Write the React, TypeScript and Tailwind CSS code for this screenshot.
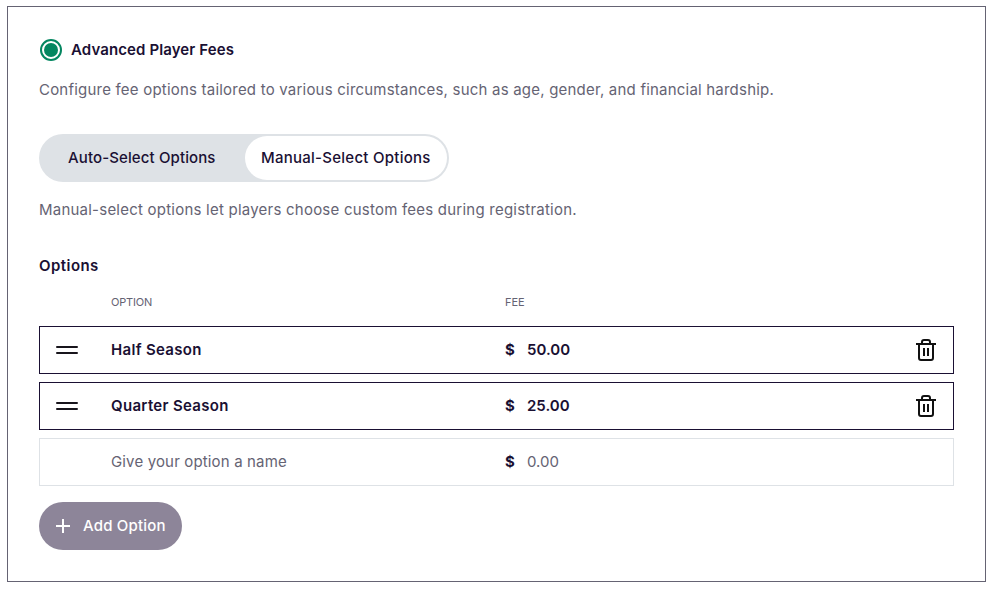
import { useState } from "react";

type FeeOption = {
  name: string;
  fee: string;
};

const initialOptions: FeeOption[] = [
  { name: "Half Season", fee: "50.00" },
  { name: "Quarter Season", fee: "25.00" },
];

const DragIcon = () => (
  <svg width="22" height="8" viewBox="0 0 22 8" fill="none" stroke="#18151c" strokeWidth="2" strokeLinecap="round">
    <path d="M1 1h20M1 7h20" />
  </svg>
);

const TrashIcon = () => (
  <svg
    width="24"
    height="24"
    viewBox="0 0 24 24"
    fill="none"
    stroke="#111111"
    strokeWidth="2"
    strokeLinejoin="round"
  >
    <path d="M2 6h20" />
    <path d="M5 6v14a2 2 0 0 0 2 2h10a2 2 0 0 0 2-2V6" />
    <path d="M8 6V4a2 2 0 0 1 2-2h4a2 2 0 0 1 2 2v2" />
    <path d="M10 10v8M14 10v8" />
  </svg>
);

const PlusIcon = () => (
  <svg width="14" height="14" viewBox="0 0 14 14" fill="none" stroke="currentColor" strokeWidth="2">
    <path d="M7 0v14M0 7h14" />
  </svg>
);

const App = () => {
  const [options, setOptions] = useState<FeeOption[]>(initialOptions);

  const removeOption = (name: string) => {
    setOptions(options.filter((option) => option.name !== name));
  };

  return (
    <div className="h-[593px] bg-white pt-1.5 pl-[7px] font-['Inter',sans-serif] text-[15px] leading-6 whitespace-nowrap text-[#1a1033] antialiased">
      <div className="h-[576px] w-[979px] border border-[#656373] p-[31px]">
        {/* Fee type */}
        <label className="flex items-center">
          <span className="ml-px flex size-[22px] items-center justify-center rounded-full border-2 border-[#048660]">
            <span className="size-[14px] rounded-full bg-[#048660]" />
          </span>
          <span className="ml-[9px] font-semibold tracking-[0.11px]">Advanced Player Fees</span>
        </label>
        <p className="mt-4 tracking-[0.21px] text-[#656373]">
          Configure fee options tailored to various circumstances, such as age, gender, and financial hardship.
        </p>

        {/* Mode toggle */}
        <div className="mt-8 flex h-12 w-[410px] rounded-full bg-[#dee2e6] p-0.5 font-medium">
          <button type="button" className="w-[204px] pl-[27px] text-left tracking-[0.12px]">
            Auto-Select Options
          </button>
          <button type="button" className="w-[202px] rounded-full bg-white pl-4 text-left tracking-[0.26px]">
            Manual-Select Options
          </button>
        </div>
        <p className="mt-4 tracking-[0.227px] text-[#656373]">
          Manual-select options let players choose custom fees during registration.
        </p>

        {/* Options */}
        <h2 className="mt-8 font-semibold tracking-[0.45px]">Options</h2>
        <div className="mt-4 flex pl-[72px] text-[11px] leading-4 tracking-[-0.2px] text-[#656373]">
          <span className="w-[394px]">OPTION</span>
          <span className="tracking-normal">FEE</span>
        </div>
        <div className="mt-4 flex flex-col gap-2">
          {options.map((option) => (
            <div key={option.name} className="flex h-12 items-center border border-[#1a1033] px-4 font-semibold">
              <span className="w-[55px]">
                <DragIcon />
              </span>
              <span className="w-[394px] tracking-[0.32px]">{option.name}</span>
              <span className="w-[22px] font-bold">$</span>
              <span>{option.fee}</span>
              <button type="button" className="-mr-px ml-auto" onClick={() => removeOption(option.name)}>
                <TrashIcon />
              </button>
            </div>
          ))}
          <div className="flex h-12 items-center border border-[#dee2e6] pr-4 pl-[71px] text-[#656373]">
            <span className="w-[394px] tracking-[0.15px]">Give your option a name</span>
            <span className="w-[22px] font-bold text-[#1a1033]">$</span>
            <span>0.00</span>
          </div>
        </div>
        <button
          type="button"
          className="mt-4 flex h-12 w-[143px] items-center rounded-full bg-[#8d8599] pl-[17px] font-medium text-white"
        >
          <PlusIcon />
          <span className="ml-[13px] tracking-[0.2px]">Add Option</span>
        </button>
      </div>
    </div>
  );
};

export default App;
